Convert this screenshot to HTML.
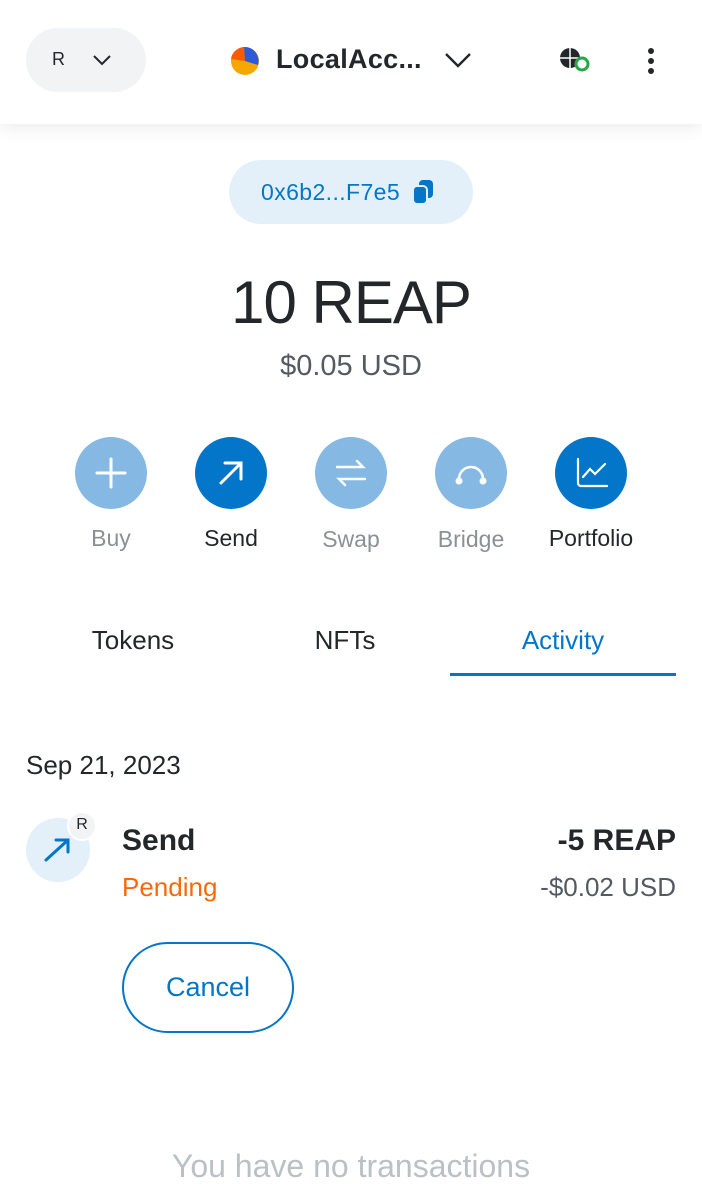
<!DOCTYPE html>
<html><head><meta charset="utf-8"><style>
*{margin:0;padding:0;box-sizing:border-box}
body{width:702px;height:1190px;overflow:hidden;background:#fff;font-family:"Liberation Sans",sans-serif;color:#24272a;position:relative}
.a{position:absolute}
.hdr{left:0;top:0;width:702px;height:124px;background:#fff;box-shadow:0 4px 16px rgba(0,0,0,.08)}
.circ{width:72px;height:72px;border-radius:50%;display:flex;align-items:center;justify-content:center}
.lbl{font-size:23px;text-align:center;width:120px}
</style></head><body>
<div class="a hdr"></div>
<div class="a" style="left:26px;top:28px;width:120px;height:64px;border-radius:32px;background:#f2f3f4"></div>
<div class="a" style="left:52px;top:49px;font-size:18px">R</div>
<svg class="a" style="left:92px;top:53px" width="20" height="14"><path d="M2 3l8 8 8-8" stroke="#24272a" stroke-width="2" fill="none"/></svg>
<svg class="a" style="left:230px;top:46px" width="30" height="30"><circle cx="15" cy="15" r="14" fill="#f5a700"/><path d="M15 15L1 13A14 14 0 0 1 14 1z" fill="#fa5a00"/><path d="M15 15L14 1A14 14 0 0 1 28 19z" fill="#2b5bd7"/></svg>
<div class="a" style="left:276px;top:44px;font-size:27px;font-weight:bold;letter-spacing:0.3px">LocalAcc...</div>
<svg class="a" style="left:444px;top:51px" width="28" height="18"><path d="M2 3l12 12 12-12" stroke="#24272a" stroke-width="2.4" fill="none"/></svg>
<svg class="a" style="left:556px;top:44px" width="36" height="30"><circle cx="14" cy="14" r="10" fill="#24272a"/><path d="M4 14h20M14 4v20" stroke="#fff" stroke-width="1.5"/><circle cx="26" cy="20" r="6" fill="#fff" stroke="#28a745" stroke-width="3"/></svg>
<div class="a" style="left:648px;top:48px;width:6px;height:6px;border-radius:3px;background:#24272a;box-shadow:0 10px 0 #24272a,0 20px 0 #24272a"></div>
<div class="a" style="left:229px;top:160px;width:244px;height:64px;border-radius:32px;background:#e3f0fa"></div>
<div class="a" style="left:261px;top:179px;font-size:23px;color:#0376c9;letter-spacing:0.4px">0x6b2...F7e5</div>
<svg class="a" style="left:410px;top:178px" width="28" height="28"><rect x="9" y="2" width="14" height="18" rx="4" fill="#0376c9"/><rect x="3" y="8" width="14" height="18" rx="4" fill="#0376c9" stroke="#e3f0fa" stroke-width="2"/></svg>
<div class="a" style="left:0;top:268px;width:702px;text-align:center;font-size:60px;letter-spacing:-1px">10 REAP</div>
<div class="a" style="left:0;top:350px;width:702px;text-align:center;font-size:29px;color:#535a61">$0.05 USD</div>

<div class="a circ" style="left:75px;top:437px;background:#85b9e4"><svg width="36" height="36"><path d="M18 4v28M4 18h28" stroke="#fff" stroke-width="3" stroke-linecap="round"/></svg></div>
<div class="a circ" style="left:195px;top:437px;background:#0376c9"><svg width="36" height="36"><path d="M8 28L28 8M12 8h16v16" stroke="#fff" stroke-width="3" fill="none" stroke-linecap="round"/></svg></div>
<div class="a circ" style="left:315px;top:437px;background:#85b9e4"><svg width="36" height="36"><path d="M4 12h26l-6-6M32 24H6l6 6" stroke="#fff" stroke-width="2.4" fill="none" stroke-linecap="round"/></svg></div>
<div class="a circ" style="left:435px;top:437px;background:#85b9e4"><svg width="40" height="36"><path d="M8 24a12 12 0 0 1 24 0" stroke="#fff" stroke-width="2.5" fill="none"/><circle cx="8" cy="26" r="3.5" fill="#fff"/><circle cx="32" cy="26" r="3.5" fill="#fff"/></svg></div>
<div class="a circ" style="left:555px;top:437px;background:#0376c9"><svg width="36" height="36"><path d="M5 4v24a3 3 0 0 0 3 3h26M10 22l7-8 5 5 10-10" stroke="#fff" stroke-width="2.2" fill="none" stroke-linecap="round"/></svg></div>
<div class="a lbl" style="left:51px;top:525px;color:#8c9094">Buy</div>
<div class="a lbl" style="left:171px;top:525px">Send</div>
<div class="a lbl" style="left:291px;top:526px;color:#8c9094">Swap</div>
<div class="a lbl" style="left:411px;top:526px;color:#8c9094">Bridge</div>
<div class="a lbl" style="left:521px;top:525px;width:140px">Portfolio</div>

<div class="a" style="left:26px;top:625px;width:214px;text-align:center;font-size:26px">Tokens</div>
<div class="a" style="left:238px;top:625px;width:214px;text-align:center;font-size:26px">NFTs</div>
<div class="a" style="left:450px;top:625px;width:226px;text-align:center;font-size:26px;color:#0376c9">Activity</div>
<div class="a" style="left:450px;top:673px;width:226px;height:3px;background:#0376c9"></div>

<div class="a" style="left:26px;top:750px;font-size:26px">Sep 21, 2023</div>
<div class="a" style="left:26px;top:818px;width:64px;height:64px;border-radius:50%;background:#e3f0fa"></div>
<svg class="a" style="left:40px;top:836px" width="34" height="30"><path d="M6 24L28 4M16 4h12v12" stroke="#0376c9" stroke-width="3" fill="none" stroke-linecap="round"/></svg>
<div class="a" style="left:67px;top:811px;width:30px;height:30px;border-radius:50%;background:#f2f3f4;border:2px solid #fff;font-size:16px;text-align:center;line-height:24px">R</div>
<div class="a" style="left:122px;top:824px;font-size:30px;font-weight:bold">Send</div>
<div class="a" style="left:122px;top:872px;font-size:26px;color:#f66a0a">Pending</div>
<div class="a" style="right:26px;top:824px;font-size:30px;font-weight:bold">-5 REAP</div>
<div class="a" style="right:26px;top:872px;font-size:26px;color:#535a61">-$0.02 USD</div>
<div class="a" style="left:122px;top:942px;width:172px;height:91px;border:2px solid #0376c9;border-radius:46px;color:#0376c9;font-size:27px;text-align:center;line-height:87px">Cancel</div>
<div class="a" style="left:0;top:1148px;width:702px;text-align:center;font-size:32px;color:#bbc0c5">You have no transactions</div>
</body></html>
